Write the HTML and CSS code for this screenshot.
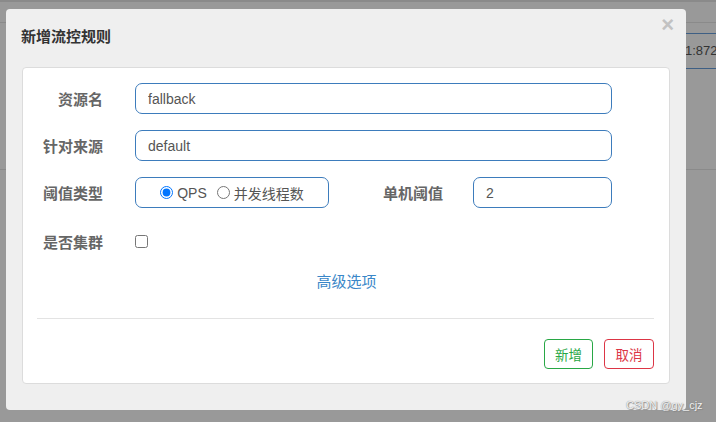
FILE: index.html
```html
<!DOCTYPE html>
<html lang="zh-CN">
<head>
<meta charset="utf-8">
<title>新增流控规则</title>
<link rel="stylesheet" href="styles.css">
</head>
<body>
<div class="page">
  <div class="topbar"></div>
  <div class="urlrow"><div class="urlbox">1:872</div></div>
  <div class="sep"></div>
</div>

<div class="modal">
  <span class="close">×</span>
  <h4 class="title">新增流控规则</h4>
  <div class="card">
    <div class="row">
      <label class="label">资源名</label>
      <input class="field wide" type="text" value="fallback">
    </div>
    <div class="row">
      <label class="label">针对来源</label>
      <input class="field wide" type="text" value="default">
    </div>
    <div class="row">
      <label class="label">阈值类型</label>
      <div class="radios">
        <label class="opt"><input type="radio" name="grade" checked><span>QPS</span></label>
        <label class="opt"><input type="radio" name="grade"><span>并发线程数</span></label>
      </div>
      <label class="label label2">单机阈值</label>
      <input class="field narrow" type="text" value="2">
    </div>
    <div class="row row4">
      <label class="label">是否集群</label>
      <input class="check" type="checkbox">
    </div>
    <div class="adv"><a class="link">高级选项</a></div>
    <hr class="rule">
    <div class="footer">
      <button class="btn btn-ok">新增</button>
      <button class="btn btn-cancel">取消</button>
    </div>
  </div>
</div>

<div class="watermark">CSDN @gy_cjz</div>
</body>
</html>
```

FILE: styles.css
```css
html, body {
  margin: 0;
  padding: 0;
}
body {
  width: 716px;
  height: 422px;
  overflow: hidden;
  background: #999999;
  font-family: "Liberation Sans", "Noto Sans CJK SC", sans-serif;
  position: relative;
}

.page .topbar {
  height: 20px;
  border-top: 2px solid #8a8a8a;
  border-bottom: 1px solid #8a8a8a;
}
.urlrow {
  margin-top: 10px;
}
.urlbox {
  margin-left: 685px;
  height: 34px;
  border-top: 1px solid #3e5f84;
  border-bottom: 1px solid #3e5f84;
  line-height: 34px;
  font-size: 13px;
  color: #333;
  white-space: nowrap;
  overflow: hidden;
}
.sep {
  margin-top: 100px;
  border-bottom: 1px solid #8a8a8a;
}

.modal {
  position: absolute;
  left: 6px;
  top: 9px;
  width: 680px;
  height: 401px;
  box-sizing: border-box;
  background: #efefef;
  border-radius: 4px;
  padding: 16px 16px 0 16px;
}
.close {
  position: absolute;
  right: 12px;
  top: 3px;
  font-size: 22px;
  font-weight: bold;
  color: #c2c2c2;
  font-family: "Liberation Sans", sans-serif;
  line-height: 26px;
}
.title {
  margin: 0 0 21px -1px;
  font-family: "Noto Sans CJK SC", sans-serif;
  font-size: 15px;
  font-weight: bold;
  color: #333;
  line-height: 21px;
}
.card {
  background: #fff;
  border: 1px solid #dcdcdc;
  border-radius: 4px;
  height: 317px;
  box-sizing: border-box;
  padding: 15px 15px 0 14px;
}
.row {
  display: flex;
  align-items: center;
  height: 31px;
  margin-bottom: 16px;
}
.row4 {
  margin-top: 18px;
  margin-bottom: 0;
}
.label {
  width: 66px;
  flex: none;
  text-align: right;
  margin-right: 32px;
  font-family: "Noto Sans CJK SC", sans-serif;
  font-size: 15px;
  font-weight: bold;
  color: #666;
}
.label2 {
  width: 114px;
  margin-right: 30px;
}
.field {
  box-sizing: border-box;
  height: 31px;
  border: 1px solid #3d7cbc;
  border-radius: 7px;
  padding: 0 12px;
  font-family: "Liberation Sans", sans-serif;
  font-size: 14px;
  color: #555;
  outline: none;
  margin: 0;
}
.wide { width: 477px; }
.narrow { width: 139px; }
.radios {
  box-sizing: border-box;
  width: 194px;
  height: 31px;
  border: 1px solid #3d7cbc;
  border-radius: 7px;
  display: flex;
  align-items: center;
  justify-content: center;
  gap: 10px;
  font-family: "Liberation Sans", "Noto Sans CJK SC", sans-serif;
  font-size: 14px;
  color: #555;
}
.opt {
  display: flex;
  align-items: center;
  gap: 4px;
}
.opt input {
  margin: 0;
  width: 13px;
  height: 13px;
}
.check {
  margin: 0;
  width: 13px;
  height: 13px;
}
.adv {
  text-align: center;
  margin-top: 14px;
  line-height: 20px;
  padding-left: 2px;
}
.link {
  font-family: "Noto Sans CJK SC", sans-serif;
  font-size: 15px;
  color: #3a87c8;
}
.rule {
  margin: 26px 0 0 0;
  border: 0;
  border-top: 1px solid #e3e3e3;
  height: 0;
}
.footer {
  display: flex;
  justify-content: flex-end;
  gap: 11px;
  margin-top: 20px;
}
.btn {
  box-sizing: border-box;
  height: 30px;
  padding: 0 9px;
  background: #fff;
  border-radius: 4px;
  font-family: "Noto Sans CJK SC", sans-serif;
  font-size: 13.5px;
  line-height: 28px;
  cursor: pointer;
}
.btn-ok {
  width: 49px;
  border: 1px solid #28a745;
  color: #28a745;
}
.btn-cancel {
  width: 50px;
  border: 1px solid #dc3545;
  color: #dc3545;
}
.watermark {
  position: absolute;
  left: 626px;
  top: 399px;
  font-family: "Liberation Sans", sans-serif;
  font-size: 11px;
  color: #f2f2f2;
  text-shadow: 0 0 1px #777, 1px 1px 1px #888;
  white-space: nowrap;
}
```
